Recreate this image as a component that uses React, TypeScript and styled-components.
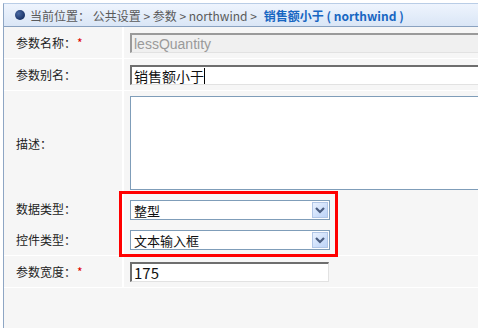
import { createGlobalStyle, styled } from 'styled-components'

const GlobalStyle = createGlobalStyle`
    html, body {
        margin: 0;
        padding: 0;
        background: #ffffff;
        overflow: hidden;
    }
    body {
        font-family: "Noto Sans CJK SC", "DejaVu Sans", sans-serif;
        font-size: 12px;
        color: #333333;
    }
`

type Row = {
    label: string
    required?: boolean
    tall?: boolean
    pad?: string
    field: 'disabled' | 'text' | 'area' | 'select' | 'number'
    value?: string
}

const rows: Row[] = [
    { label: '参数名称：', required: true, field: 'disabled', value: 'lessQuantity' },
    { label: '参数别名：', field: 'text', value: '销售额小于' },
    { label: '描述：', tall: true, field: 'area' },
    { label: '数据类型：', field: 'select', value: '整型', pad: '8px 6px 4px' },
    { label: '控件类型：', field: 'select', value: '文本输入框' },
    { label: '参数宽度：', required: true, field: 'number', value: '175' },
]

const Chevron = () => (
    <svg width="10" height="7" viewBox="0 0 10 7">
        <path d="M1 1 L5 5 L9 1" fill="none" stroke="#4a5d80" strokeWidth="2.2" />
    </svg>
)

const Field = ({ row }: { row: Row }) => {
    switch (row.field) {
        case 'disabled':
            return <InsetInput $disabled $width="420px">{row.value}</InsetInput>
        case 'text':
            return (
                <InsetInput $width="420px">
                    <span>{row.value}</span>
                    <Caret />
                </InsetInput>
            )
        case 'area':
            return <TextArea />
        case 'select':
            return (
                <Select>
                    <span>{row.value}</span>
                    <DropButton>
                        <Chevron />
                    </DropButton>
                </Select>
            )
        default:
            return <InsetInput $width="199px" $fontSize="15px">{row.value}</InsetInput>
    }
}

export default function App() {
    return (
        <>
            <GlobalStyle />
            <Page>
                <Panel>
                    <Header>
                        <Bullet />
                        <Crumbs>当前位置：&nbsp;公共设置 &gt; 参数 &gt; northwind &gt;</Crumbs>
                        <Current>销售额小于 ( northwind )</Current>
                    </Header>
                    <Form>
                        {rows.map(row => (
                            <FormRow key={row.label} $tall={row.tall}>
                                <Label>
                                    {row.label}
                                    {row.required && <Star>*</Star>}
                                </Label>
                                <Value $pad={row.pad}>
                                    <Field row={row} />
                                </Value>
                            </FormRow>
                        ))}
                        <Filler />
                    </Form>
                    <Highlight />
                </Panel>
            </Page>
        </>
    )
}

const Page = styled.div`
    width: 478px;
    height: 328px;
    padding: 3px 0 0 3px;
    box-sizing: border-box;
    overflow: hidden;
`

const Panel = styled.div`
    position: relative;
    width: 560px;
    height: 325px;
    border-left: 1px solid #8ea6c4;
    border-top: 1px solid #b9cde6;
    display: flex;
    flex-direction: column;
    background: #f6f6f6;
`

const Header = styled.div`
    height: 22px;
    display: flex;
    align-items: center;
    gap: 5px;
    padding-left: 11px;
    background: linear-gradient(#eef4fd, #dae6f6);
    border-bottom: 1px solid #8aa2c0;
    white-space: nowrap;
`

const Bullet = styled.span`
    width: 10px;
    height: 10px;
    border-radius: 50%;
    background: radial-gradient(circle at 35% 35%, #4a6aa3, #1b3468 70%);
`

const Crumbs = styled.span`
    color: #5a5a5a;
    font-size: 12px;
`

const Current = styled.span`
    color: #1766c2;
    font-size: 12px;
    font-weight: 700;
    margin-left: 2px;
`

const Form = styled.div`
    flex: 1;
    display: flex;
    flex-direction: column;
    gap: 1px;
    background: #ffffff;
`

const FormRow = styled.div<{ $tall?: boolean }>`
    display: grid;
    grid-template-columns: 118px 1fr;
    column-gap: 2px;
    height: ${props => (props.$tall ? '100px' : '31px')};
`

const Label = styled.div`
    display: flex;
    align-items: center;
    padding-left: 12px;
    background: #f6f6f6;
    color: #222222;
    font-size: 12px;
`

const Star = styled.span`
    color: #e00000;
    margin-left: 1px;
`

const Value = styled.div<{ $pad?: string }>`
    background: #f6f6f6;
    padding: ${props => props.$pad || '6px 6px 5px'};
    box-sizing: border-box;
`

const Filler = styled.div`
    flex: 1;
    background: #f6f6f6;
`

const InsetInput = styled.div<{ $disabled?: boolean, $width?: string, $fontSize?: string }>`
    width: ${props => props.$width || '200px'};
    height: 20px;
    box-sizing: border-box;
    display: flex;
    align-items: center;
    padding-left: 2px;
    background: ${props => (props.$disabled ? '#f0f0f0' : '#ffffff')};
    color: ${props => (props.$disabled ? '#9a9a9a' : '#111111')};
    font-family: ${props => (props.$disabled ? '"Liberation Sans", Arial, sans-serif' : '"Noto Sans CJK SC", "Liberation Sans", sans-serif')};
    font-size: ${props => props.$fontSize || '14px'};
    border-top: 2px solid ${props => (props.$disabled ? '#9a9a9a' : '#6e6e6e')};
    border-left: 2px solid ${props => (props.$disabled ? '#9a9a9a' : '#6e6e6e')};
    border-right: 1px solid #e2e2e2;
    border-bottom: 1px solid #e2e2e2;
`

const Caret = styled.span`
    width: 1px;
    height: 16px;
    background: #000000;
`

const TextArea = styled.div`
    width: 420px;
    height: 94px;
    margin-top: -1px;
    box-sizing: border-box;
    background: #ffffff;
    border: 1px solid #7f9db9;
`

const Select = styled.div`
    width: 200px;
    height: 20px;
    box-sizing: border-box;
    display: flex;
    align-items: center;
    justify-content: space-between;
    padding: 0 1px 0 3px;
    background: #ffffff;
    border: 1px solid #7f9db9;
    color: #111111;
    font-size: 13px;
`

const DropButton = styled.span`
    width: 16px;
    height: 16px;
    box-sizing: border-box;
    display: flex;
    align-items: center;
    justify-content: center;
    background: linear-gradient(135deg, #e8f1ff, #bcd3f7);
    border: 1px solid #b1c6e6;
`

const Highlight = styled.div`
    position: absolute;
    left: 115px;
    top: 187px;
    width: 219px;
    height: 66px;
    box-sizing: border-box;
    border: 3px solid #ff0000;
    pointer-events: none;
`
